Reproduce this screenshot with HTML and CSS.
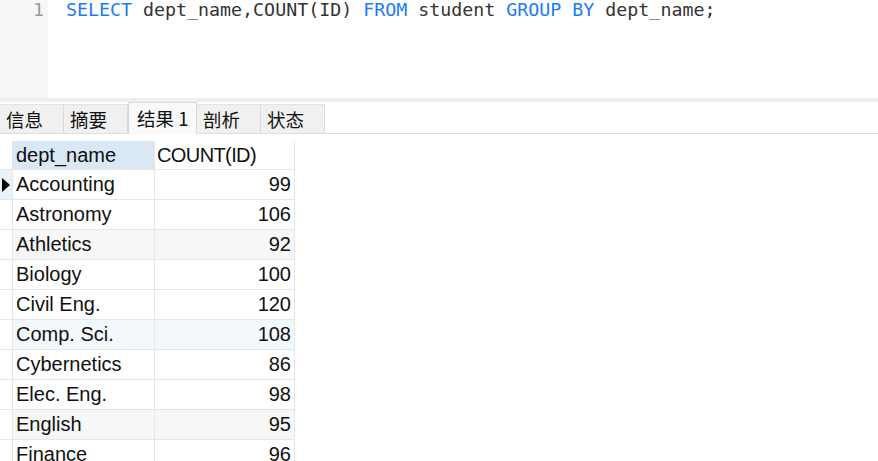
FILE: index.html
```html
<!DOCTYPE html>
<html>
<head>
<meta charset="utf-8">
<link rel="stylesheet" href="styles.css">
</head>
<body>
<div class="editor">
  <div class="gutter"><span class="ln">1</span></div>
  <div class="code"><span class="kw">SELECT</span> dept_name,COUNT(ID) <span class="kw">FROM</span> student <span class="kw">GROUP BY</span> dept_name;</div>
</div>
<div class="sep"></div>
<div class="tabs">
  <div class="tab">信息</div>
  <div class="tab">摘要</div>
  <div class="tab active">结果 1</div>
  <div class="tab">剖析</div>
  <div class="tab">状态</div>
</div>
<div class="grid-wrap">
<table class="grid">
  <thead>
    <tr><th class="ind"></th><th class="name hdr-sel">dept_name</th><th class="cnt">COUNT(ID)</th></tr>
  </thead>
  <tbody>
    <tr class="cur"><td class="ind"><span class="arrow"></span></td><td class="name">Accounting</td><td class="num">99</td></tr>
    <tr><td class="ind"></td><td class="name">Astronomy</td><td class="num">106</td></tr>
    <tr class="alt"><td class="ind"></td><td class="name">Athletics</td><td class="num">92</td></tr>
    <tr><td class="ind"></td><td class="name">Biology</td><td class="num">100</td></tr>
    <tr><td class="ind"></td><td class="name">Civil Eng.</td><td class="num">120</td></tr>
    <tr class="hov"><td class="ind"></td><td class="name">Comp. Sci.</td><td class="num">108</td></tr>
    <tr><td class="ind"></td><td class="name">Cybernetics</td><td class="num">86</td></tr>
    <tr><td class="ind"></td><td class="name">Elec. Eng.</td><td class="num">98</td></tr>
    <tr class="alt"><td class="ind"></td><td class="name">English</td><td class="num">95</td></tr>
    <tr><td class="ind"></td><td class="name">Finance</td><td class="num">96</td></tr>
  </tbody>
</table>
</div>
</body>
</html>
```

FILE: styles.css
```css
html, body {
  margin: 0;
  padding: 0;
  background: #ffffff;
  overflow: hidden;
  height: 461px;
}

.editor {
  display: flex;
  height: 98px;
}

.gutter {
  width: 48px;
  background: #f7f7f7;
  text-align: right;
  box-sizing: border-box;
  padding-right: 4px;
}

.ln, .code {
  font-family: "DejaVu Sans Mono", "Liberation Mono", monospace;
  font-size: 18.3px;
  line-height: 20px;
}

.ln {
  color: #9a9a9a;
}

.code {
  padding-left: 18px;
  color: #333333;
  white-space: pre;
}

.kw {
  color: #1a7cf8;
}

.sep {
  height: 4px;
  background: #f0f0f0;
}

.tabs {
  display: flex;
  align-items: flex-end;
  height: 31px;
  border-bottom: 1px solid #dedede;
  font-family: "Noto Sans CJK SC", "Liberation Sans", sans-serif;
  font-size: 18.5px;
  color: #111111;
}

.tab {
  width: 64px;
  height: 29px;
  box-sizing: border-box;
  padding-left: 6px;
  line-height: 29px;
  background: #f0f0f0;
  border-right: 1px solid #dadada;
  border-top: 1px solid #e4e4e4;
}

.tab.active {
  width: 69px;
  height: 32px;
  line-height: 30px;
  padding-left: 8px;
  background: #f9f9f9;
  border: 1px solid #dadada;
  border-bottom: none;
  margin-bottom: -1px;
}

.grid-wrap {
  padding-top: 7px;
}

.grid {
  border-collapse: collapse;
  font-family: "Liberation Sans", Arial, sans-serif;
  font-size: 20px;
  color: #111111;
}

.grid th, .grid td {
  height: 29px;
  padding: 0;
  border: 1px solid #e6e6e6;
  font-weight: normal;
  text-align: left;
  white-space: nowrap;
}

.grid th {
  height: 28px;
  border-top: none;
}

.grid .ind {
  width: 12px;
  border-left: none;
}

.grid th.ind {
  border-bottom: none;
}

.grid .name {
  width: 138px;
  padding-left: 3px;
}

.grid .cnt {
  width: 137px;
  padding-left: 2px;
  letter-spacing: -0.6px;
}

.grid .num {
  text-align: right;
  padding-right: 3px;
}

.hdr-sel {
  background: #dae8f6;
}

tr.cur td.ind {
  background: #e9f1fa;
}

.arrow {
  display: block;
  width: 0;
  height: 0;
  margin-left: 2px;
  border-top: 7px solid transparent;
  border-bottom: 7px solid transparent;
  border-left: 8px solid #000000;
}

tr.alt td.name, tr.alt td.num {
  background: #f7f7f7;
}

tr.hov td.name, tr.hov td.num {
  background: #f3f8fd;
}
```
